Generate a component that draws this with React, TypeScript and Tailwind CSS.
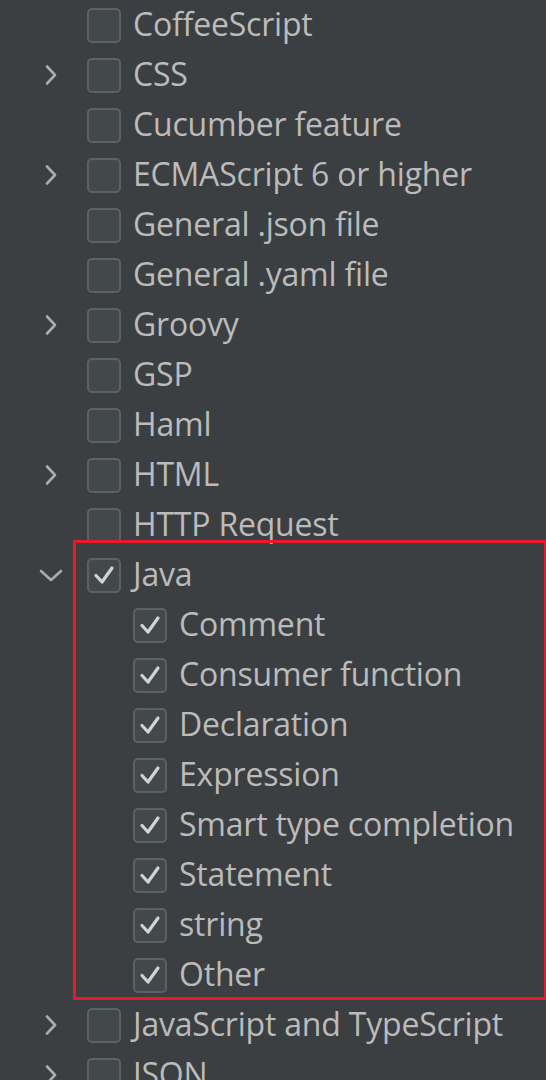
import React from "react";

type Row = { label: string; chevron?: "right" | "down"; checked?: boolean; level?: number };

const rows: Row[] = [
  { label: "CoffeeScript" },
  { label: "CSS", chevron: "right" },
  { label: "Cucumber feature" },
  { label: "ECMAScript 6 or higher", chevron: "right" },
  { label: "General .json file" },
  { label: "General .yaml file" },
  { label: "Groovy", chevron: "right" },
  { label: "GSP" },
  { label: "Haml" },
  { label: "HTML", chevron: "right" },
  { label: "HTTP Request" },
  { label: "Java", chevron: "down", checked: true },
  { label: "Comment", checked: true, level: 1 },
  { label: "Consumer function", checked: true, level: 1 },
  { label: "Declaration", checked: true, level: 1 },
  { label: "Expression", checked: true, level: 1 },
  { label: "Smart type completion", checked: true, level: 1 },
  { label: "Statement", checked: true, level: 1 },
  { label: "string", checked: true, level: 1 },
  { label: "Other", checked: true, level: 1 },
  { label: "JavaScript and TypeScript", chevron: "right" },
  { label: "JSON", chevron: "right" },
];

function Chevron({ dir }: { dir: "right" | "down" }) {
  return (
    <svg width="26" height="26" viewBox="0 0 26 26" fill="none">
      {dir === "right" ? (
        <polyline points="9,4.5 17,13 9,21.5" stroke="#a9abac" strokeWidth="2.6" strokeLinecap="round" strokeLinejoin="round" />
      ) : (
        <polyline points="3,9 13,18 23,9" stroke="#a9abac" strokeWidth="2.6" strokeLinecap="round" strokeLinejoin="round" />
      )}
    </svg>
  );
}

function Checkbox({ checked }: { checked?: boolean }) {
  return (
    <div className="w-[34px] h-[35px] shrink-0 rounded-[5px] border-2 border-[#5e6162] bg-[#43484a] flex items-center justify-center">
      {checked && (
        <svg width="26" height="26" viewBox="0 0 26 26" fill="none">
          <polyline points="5,13.5 11,20 21,6" stroke="#d2d3d4" strokeWidth="3.2" strokeLinecap="round" strokeLinejoin="round" />
        </svg>
      )}
    </div>
  );
}

export default function App() {
  return (
    <div
      className="relative w-[546px] h-[1080px] overflow-hidden bg-[#3c3f41] text-[#bbbbbb]"
      style={{ fontFamily: '"Open Sans", "Noto Sans", sans-serif' }}
    >
      <div className="flex flex-col">
        {rows.map((r, i) => (
          <div key={i} className="h-[50px] flex items-center shrink-0">
            <div className="w-[87px] shrink-0 flex items-center">
              <div className="w-[38px]" />
              {r.chevron && <Chevron dir={r.chevron} />}
            </div>
            {r.level === 1 && <div className="w-[46px] shrink-0" />}
            <Checkbox checked={r.checked} />
            <span className="ml-[12px] pb-[3px] text-[32px] leading-none whitespace-nowrap tracking-[-0.2px]">{r.label}</span>
          </div>
        ))}
      </div>
      <div className="absolute left-[73px] top-[540px] w-[473px] h-[460px] border-[3px] border-r-2 border-[#e8192c]" />
    </div>
  );
}
